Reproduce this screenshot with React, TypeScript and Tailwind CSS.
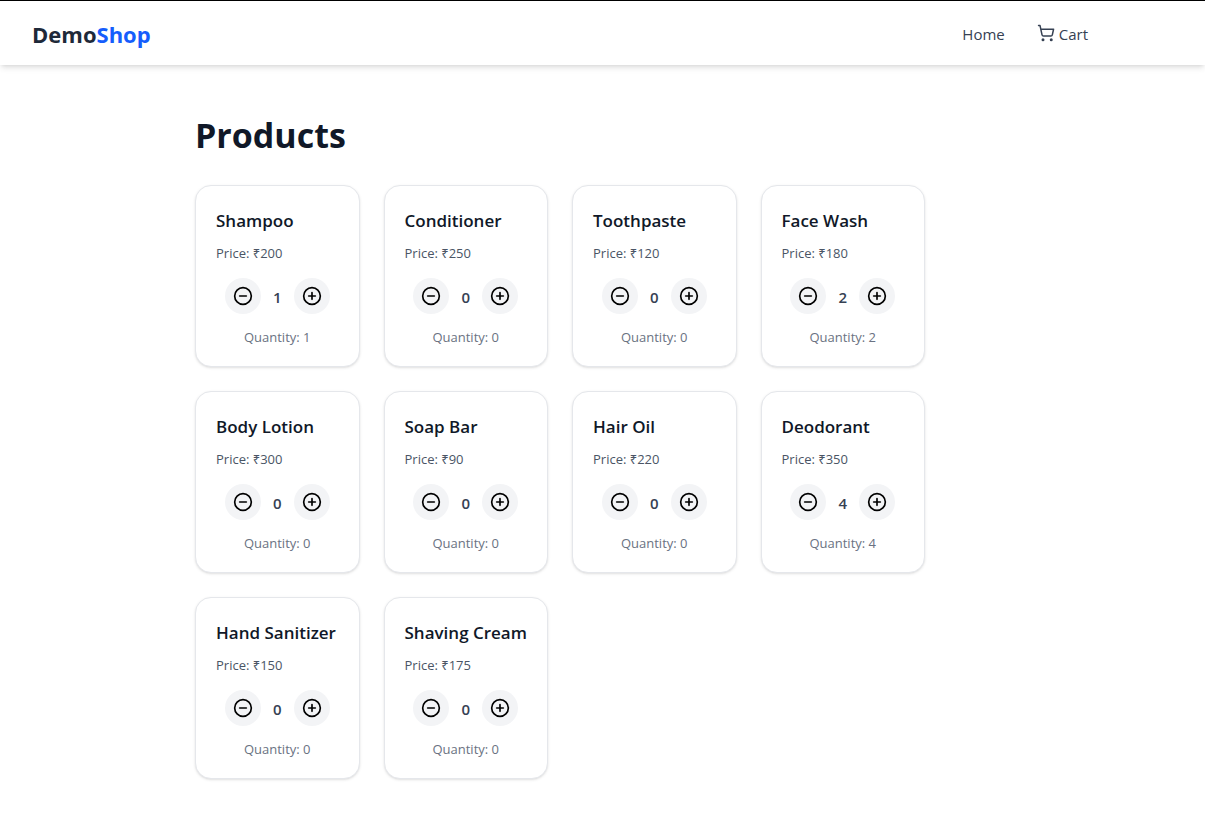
import { useState } from "react";
import { CircleMinus, CirclePlus, ShoppingCart } from "lucide-react";

type Product = { id: number; name: string; price: number; quantity: number };

const initialProducts: Product[] = [
  { id: 1, name: "Shampoo", price: 200, quantity: 1 },
  { id: 2, name: "Conditioner", price: 250, quantity: 0 },
  { id: 3, name: "Toothpaste", price: 120, quantity: 0 },
  { id: 4, name: "Face Wash", price: 180, quantity: 2 },
  { id: 5, name: "Body Lotion", price: 300, quantity: 0 },
  { id: 6, name: "Soap Bar", price: 90, quantity: 0 },
  { id: 7, name: "Hair Oil", price: 220, quantity: 0 },
  { id: 8, name: "Deodorant", price: 350, quantity: 4 },
  { id: 9, name: "Hand Sanitizer", price: 150, quantity: 0 },
  { id: 10, name: "Shaving Cream", price: 175, quantity: 0 },
];

function Navbar() {
  return (
    <nav className="border-t border-black bg-white shadow-md">
      <div className="flex h-16 max-w-[1120px] items-center justify-between px-8">
        <a href="#home" className="pt-0.5 text-[22px] leading-8 font-bold text-gray-800">
          Demo<span className="text-blue-600">Shop</span>
        </a>
        <div className="flex items-center gap-8 text-[15px] leading-6 text-gray-700">
          <a href="#home" className="pt-0.5">Home</a>
          <a href="#cart" className="flex items-center gap-1">
            <ShoppingCart size={18} />
            <span className="pt-0.5">Cart</span>
          </a>
        </div>
      </div>
    </nav>
  );
}

function ProductCard({ product, onChange }: { product: Product; onChange: (delta: number) => void }) {
  return (
    <article className="rounded-2xl border border-gray-200 bg-white px-5 pt-[21px] pb-[19px] shadow-sm">
      <h2 className="text-[17px] leading-7 font-semibold whitespace-nowrap text-gray-900">{product.name}</h2>
      <p className="mt-2 text-[13px] leading-5 text-gray-600">Price: ₹{product.price}</p>
      <div className="mt-[15px] flex items-center justify-center gap-3">
        <button
          type="button"
          aria-label={`Remove one ${product.name}`}
          onClick={() => onChange(-1)}
          className="rounded-full bg-gray-100 p-2 text-black hover:bg-gray-200"
        >
          <CircleMinus size={20} />
        </button>
        <span className="pt-0.5 text-[15px] leading-6 font-semibold text-gray-700">{product.quantity}</span>
        <button
          type="button"
          aria-label={`Add one ${product.name}`}
          onClick={() => onChange(1)}
          className="rounded-full bg-gray-100 p-2 text-black hover:bg-gray-200"
        >
          <CirclePlus size={20} />
        </button>
      </div>
      <p className="mt-[13px] text-center text-[13px] leading-5 text-gray-500">Quantity: {product.quantity}</p>
    </article>
  );
}

export default function App() {
  const [products, setProducts] = useState(initialProducts);

  const changeQuantity = (id: number, delta: number) =>
    setProducts((items) =>
      items.map((item) => (item.id === id ? { ...item, quantity: Math.max(0, item.quantity + delta) } : item)),
    );

  return (
    <div className="min-h-screen bg-white font-['Open_Sans','Noto_Sans',sans-serif]">
      <Navbar />
      <div className="max-w-[1120px] px-8 py-12">
        <main className="mx-auto max-w-[730px]">
          <h1 className="pt-0.5 pb-[30px] text-[34px] leading-10 font-bold text-gray-900">Products</h1>
          <div className="grid grid-cols-2 gap-6 md:grid-cols-4">
            {products.map((product) => (
              <ProductCard
                key={product.id}
                product={product}
                onChange={(delta) => changeQuantity(product.id, delta)}
              />
            ))}
          </div>
        </main>
      </div>
    </div>
  );
}
